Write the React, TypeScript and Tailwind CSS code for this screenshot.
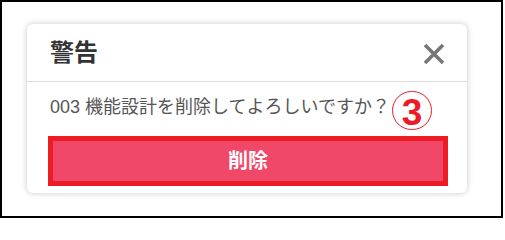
export default function App() {
  return (
    <div
      className="w-[503px] h-[218px] border-2 border-black bg-white pl-[25px] pt-[22px]"
      style={{ fontFamily: '"Liberation Sans", "Noto Sans CJK JP", sans-serif' }}
    >
      <div className="relative w-[440px] h-[169px] rounded-[6px] bg-white shadow-[0_0_6px_rgba(0,0,0,0.22)]">
        {/* header */}
        <div className="h-[58px] flex items-center justify-between pl-[23px] pr-[21px] border-b border-[#d9d9d9]">
          <h2 className="text-[24px] font-bold text-[#333] leading-none">警告</h2>
          <svg width="24" height="24" viewBox="0 0 24 24" className="mt-[2px]">
            <path d="M3 3 L21 21 M21 3 L3 21" stroke="#777" strokeWidth="3.6" fill="none" />
          </svg>
        </div>
        {/* body */}
        <div className="px-[21px] pt-[12px]">
          <p className="ml-[2px] text-[18px] leading-[27px] text-[#555]">
            003 機能設計を削除してよろしいですか？
          </p>
          <button className="mt-[15px] w-[400px] h-[50px] border-[5px] border-[#ed1c24] bg-[#ef4868] text-white text-[20px] font-bold flex items-center justify-center">
            削除
          </button>
        </div>
        {/* annotation badge */}
        <div className="absolute left-[365px] top-[67px] w-[40px] h-[39px] rounded-full border-[1.5px] border-[#ed1c24] bg-white flex items-center justify-center">
          <span className="text-[#ed1c24] text-[37px] font-black leading-none mt-[3px]">3</span>
        </div>
      </div>
    </div>
  );
}
